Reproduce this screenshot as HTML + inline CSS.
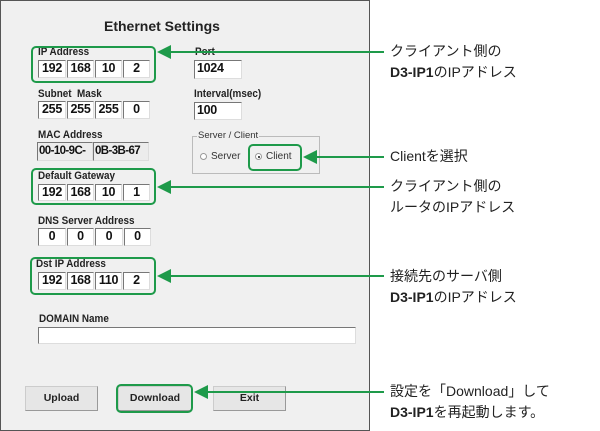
<!DOCTYPE html>
<html><head><meta charset="utf-8"><style>
*{margin:0;padding:0;box-sizing:border-box}
body{width:600px;height:431px;background:#fff;position:relative;overflow:hidden;font-family:"Liberation Sans",Arial,sans-serif}
.a{position:absolute}
.win{left:0;top:0;width:370px;height:431px;background:#f0f0f0;border:1.5px solid #555}
.lb{position:absolute;font-size:11px;font-weight:bold;color:#222;transform:scaleX(0.9);transform-origin:left;white-space:nowrap}
.f{position:absolute;background:#fff;border-top:1.5px solid #777;border-left:1.5px solid #777;border-right:1px solid #ddd;border-bottom:1px solid #ddd;font-size:12.5px;font-weight:bold;color:#111;text-align:center;line-height:15px;white-space:nowrap;letter-spacing:-0.3px;overflow:hidden}
.g{background:#ececec;font-size:11.5px;letter-spacing:-0.6px}
.gb{position:absolute;border:2px solid #1e9a4a;border-radius:5px}
.btn{position:absolute;background:#e6e6e6;border:1px solid #ccc;border-right:1.5px solid #999;border-bottom:1.5px solid #999;font-size:10.5px;font-weight:bold;text-align:center;line-height:22px;color:#222}
.t{position:absolute;left:390px;font-family:"Liberation Sans","Noto Sans CJK JP",sans-serif;font-size:14px;color:#222;line-height:21px;white-space:nowrap}
.t b{font-weight:bold}
</style></head><body>
<div class="a win"></div>
<div class="a" style="left:104px;top:18px;font-size:14px;font-weight:bold;color:#222">Ethernet Settings</div>

<div class="lb" style="left:38px;top:46px">IP Address</div>
<div class="f" style="left:38px;top:60px;width:28px;height:18px">192</div>
<div class="f" style="left:67px;top:60px;width:27px;height:18px">168</div>
<div class="f" style="left:95px;top:60px;width:27px;height:18px">10</div>
<div class="f" style="left:123px;top:60px;width:27px;height:18px">2</div>

<div class="lb" style="left:195px;top:46px">Port</div>
<div class="f" style="left:194px;top:60px;width:48px;height:19px;text-align:left;padding-left:2px">1024</div>

<div class="lb" style="left:38px;top:88px">Subnet&nbsp; Mask</div>
<div class="f" style="left:38px;top:101px;width:28px;height:18px">255</div>
<div class="f" style="left:67px;top:101px;width:27px;height:18px">255</div>
<div class="f" style="left:95px;top:101px;width:27px;height:18px">255</div>
<div class="f" style="left:123px;top:101px;width:27px;height:18px">0</div>

<div class="lb" style="left:194px;top:88px">Interval(msec)</div>
<div class="f" style="left:194px;top:102px;width:48px;height:18px;text-align:left;padding-left:2px">100</div>

<div class="lb" style="left:38px;top:129px">MAC Address</div>
<div class="f g" style="left:37px;top:142px;width:56px;height:19px;text-align:left;padding-left:1px;line-height:16px">00-10-9C-</div>
<div class="f g" style="left:93px;top:142px;width:56px;height:19px;text-align:left;padding-left:1px;line-height:16px">0B-3B-67</div>

<div class="a" style="left:192px;top:136px;width:128px;height:38px;border:1px solid #bbb"></div>
<div class="a" style="left:197px;top:130px;background:#f0f0f0;padding:0 1px;font-size:9.5px;color:#333">Server / Client</div>
<div class="a" style="left:200px;top:153px;width:7px;height:7px;border-radius:50%;border:1px solid #999;background:#fff"></div>
<div class="a" style="left:211px;top:151px;font-size:10px;color:#333">Server</div>
<div class="a" style="left:255px;top:153px;width:7px;height:7px;border-radius:50%;border:1px solid #999;background:#fff"><div style="position:absolute;left:1.5px;top:1.5px;width:2.5px;height:2.5px;border-radius:50%;background:#111"></div></div>
<div class="a" style="left:266px;top:151px;font-size:10px;color:#333">Client</div>

<div class="lb" style="left:38px;top:170px">Default Gateway</div>
<div class="f" style="left:38px;top:184px;width:28px;height:17px">192</div>
<div class="f" style="left:67px;top:184px;width:27px;height:17px">168</div>
<div class="f" style="left:95px;top:184px;width:27px;height:17px">10</div>
<div class="f" style="left:123px;top:184px;width:27px;height:17px">1</div>

<div class="lb" style="left:38px;top:215px">DNS Server Address</div>
<div class="f" style="left:38px;top:228px;width:28px;height:18px">0</div>
<div class="f" style="left:67px;top:228px;width:27px;height:18px">0</div>
<div class="f" style="left:95px;top:228px;width:28px;height:18px">0</div>
<div class="f" style="left:124px;top:228px;width:27px;height:18px">0</div>

<div class="lb" style="left:36px;top:258px">Dst IP Address</div>
<div class="f" style="left:38px;top:272px;width:28px;height:18px">192</div>
<div class="f" style="left:67px;top:272px;width:27px;height:18px">168</div>
<div class="f" style="left:95px;top:272px;width:27px;height:18px">110</div>
<div class="f" style="left:123px;top:272px;width:27px;height:18px">2</div>

<div class="lb" style="left:39px;top:313px">DOMAIN Name</div>
<div class="f" style="left:38px;top:327px;width:318px;height:17px"></div>

<div class="btn" style="left:25px;top:386px;width:73px;height:25px">Upload</div>
<div class="btn" style="left:118px;top:386px;width:74px;height:25px">Download</div>
<div class="btn" style="left:213px;top:386px;width:73px;height:25px">Exit</div>

<div class="gb" style="left:31px;top:46px;width:125px;height:37px"></div>
<div class="gb" style="left:248px;top:144px;width:54px;height:27px"></div>
<div class="gb" style="left:31px;top:168px;width:125px;height:37px"></div>
<div class="gb" style="left:30px;top:257px;width:126px;height:38px"></div>
<div class="gb" style="left:116px;top:384px;width:77px;height:29px"></div>

<svg class="a" style="left:0;top:0" width="600" height="431">
<g stroke="#1e9a4a" stroke-width="2" fill="#1e9a4a">
<line x1="165" y1="52" x2="384" y2="52"/><polygon points="157,52 171,45 171,59" stroke="none"/>
<line x1="312" y1="157" x2="384" y2="157"/><polygon points="303,157 317,150 317,164" stroke="none"/>
<line x1="166" y1="187" x2="384" y2="187"/><polygon points="157,187 171,180 171,194" stroke="none"/>
<line x1="166" y1="276" x2="384" y2="276"/><polygon points="157,276 171,269 171,283" stroke="none"/>
<line x1="203" y1="392" x2="384" y2="392"/><polygon points="194,392 208,385 208,399" stroke="none"/>
</g></svg>

<div class="t" style="top:41px">クライアント側の<br><b>D3-IP1</b>のIPアドレス</div>
<div class="t" style="top:146px">Clientを選択</div>
<div class="t" style="top:176px">クライアント側の<br>ルータのIPアドレス</div>
<div class="t" style="top:266px">接続先のサーバ側<br><b>D3-IP1</b>のIPアドレス</div>
<div class="t" style="top:381px">設定を「Download」して<br><b>D3-IP1</b>を再起動します。</div>
</body></html>
